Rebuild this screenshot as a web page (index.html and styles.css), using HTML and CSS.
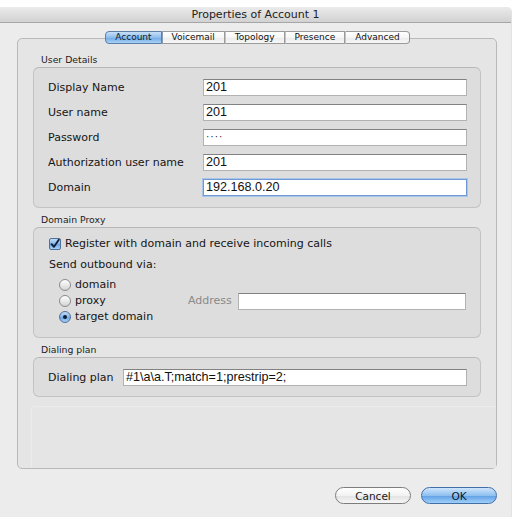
FILE: index.html
```html
<!DOCTYPE html>
<html>
<head>
<meta charset="utf-8">
<title>Properties of Account 1</title>
<link rel="stylesheet" href="styles.css">
</head>
<body>
<div class="window">
  <div class="titlebar">Properties of Account 1</div>
  <div class="main">
    <div class="tabview">
      <div class="tabs">
        <div class="tab selected">Account</div>
        <div class="tab">Voicemail</div>
        <div class="tab">Topology</div>
        <div class="tab">Presence</div>
        <div class="tab">Advanced</div>
      </div>
      <div class="tabbox">
        <div class="group-label">User Details</div>
        <div class="group details">
          <label class="lbl">Display Name</label><div class="field">201</div>
          <label class="lbl">User name</label><div class="field">201</div>
          <label class="lbl">Password</label><div class="field pw">····</div>
          <label class="lbl">Authorization user name</label><div class="field">201</div>
          <label class="lbl">Domain</label><div class="field focus">192.168.0.20</div>
        </div>

        <div class="group-label gap">Domain Proxy</div>
        <div class="group proxy">
          <div class="check-row">
            <span class="checkbox"><svg width="10" height="10" viewBox="0 0 10 10"><path d="M1.6 5.2 L4 7.8 L8.8 0.8" fill="none" stroke="#10203a" stroke-width="1.9" stroke-linecap="round" stroke-linejoin="round"/></svg></span>
            <span class="lbl">Register with domain and receive incoming calls</span>
          </div>
          <div class="lbl send">Send outbound via:</div>
          <div class="radios">
            <div class="radio-row"><span class="radio"></span><span class="lbl">domain</span></div>
            <div class="radio-row addr-row">
              <div class="radio-part"><span class="radio"></span><span class="lbl">proxy</span></div>
              <span class="lbl dim">Address</span>
              <div class="field grow"></div>
            </div>
            <div class="radio-row"><span class="radio on"></span><span class="lbl">target domain</span></div>
          </div>
        </div>

        <div class="group-label gap">Dialing plan</div>
        <div class="group dial">
          <label class="lbl">Dialing plan</label>
          <div class="field grow">#1\a\a.T;match=1;prestrip=2;</div>
        </div>

        <div class="filler"></div>
      </div>
    </div>
    <div class="buttons">
      <button class="btn">Cancel</button>
      <button class="btn default">OK</button>
    </div>
  </div>
</div>
</body>
</html>
```

FILE: styles.css
```css
html, body {
  margin: 0;
  padding: 0;
  background: #ffffff;
}

body {
  padding-top: 7px;
  font-family: "DejaVu Sans", "Lucida Grande", sans-serif;
  color: #1c1c1c;
}

.window {
  width: 512px;
  height: 510px;
  background: #ececec;
  border-top-right-radius: 5px;
  display: flex;
  flex-direction: column;
  box-sizing: border-box;
  border-right: 1px solid #e2e2e2;
}

.titlebar {
  height: 16px;
  box-sizing: border-box;
  border-bottom: 1px solid #a6a6a6;
  background: linear-gradient(#ebebeb, #d2d2d2);
  border-top-right-radius: 5px;
  text-align: center;
  font-size: 11px;
  line-height: 15px;
  color: #222222;
}

.main {
  flex: 1;
  display: flex;
  flex-direction: column;
  padding: 8px 14px 15px 17px;
}

.tabview {
  display: flex;
  flex-direction: column;
}

.tabs {
  position: relative;
  z-index: 1;
  display: flex;
  justify-content: center;
  margin-bottom: -6px;
  padding-left: 1px;
}

.tab {
  height: 13px;
  box-sizing: border-box;
  padding: 0 9px;
  font-size: 9px;
  line-height: 11px;
  color: #111111;
  background: linear-gradient(#ffffff, #f6f6f6 50%, #ebebeb 51%, #f7f7f7);
  border: 1px solid #9b9b9b;
  border-left: 1px solid #c4c4c4;
}

.tab:first-child {
  border-left: 1px solid #7a8eb0;
  border-radius: 4px 0 0 4px;
}

.tab:last-child {
  border-radius: 0 4px 4px 0;
  border-right: 1px solid #8f8f8f;
}

.tab.selected {
  background: linear-gradient(#c7e0f8, #8fbdec 50%, #6ea8e6 51%, #a9d2f6);
  border-color: #5f7ea8;
  color: #0c1a2c;
}

.tab.selected + .tab {
  border-left-color: #8a9ab0;
}

.tabbox {
  height: 431px;
  box-sizing: border-box;
  border: 1px solid #b9b9b9;
  border-radius: 5px;
  background: #e5e5e5;
  padding: 15px 15px 0 15px;
  display: flex;
  flex-direction: column;
}

.group-label {
  font-size: 9.3px;
  line-height: 12px;
  height: 12px;
  padding-left: 8px;
  margin-bottom: 1px;
  color: #1c1c1c;
}

.group-label.gap {
  margin-top: 6px;
}

.group {
  border: 1px solid #c3c3c3;
  border-top-color: #b8b8b8;
  border-radius: 6px;
  background: #dddddd;
  box-sizing: border-box;
}

.lbl {
  font-size: 11px;
  line-height: 14px;
  color: #151515;
}

.field {
  height: 17px;
  box-sizing: border-box;
  background: #ffffff;
  border: 1px solid #b2b2b2;
  border-top-color: #828282;
  font-family: "Liberation Sans", Arial, sans-serif;
  font-size: 12.6px;
  line-height: 15px;
  padding-left: 2px;
  color: #111;
  white-space: nowrap;
  overflow: hidden;
}

.field.pw {
  font-size: 10px;
  letter-spacing: 1px;
  line-height: 14px;
}

.field.focus {
  border-color: #6f99d2;
  box-shadow: 0 0 0 1px #a8c5ec;
}

.details {
  display: grid;
  grid-template-columns: 155px 1fr;
  row-gap: 8px;
  align-items: center;
  padding: 11px 13px 11px 14px;
}

.proxy {
  padding: 9px 14px 12px 15px;
  height: 111px;
}

.check-row {
  display: flex;
  align-items: center;
  height: 14px;
}

.checkbox {
  width: 12px;
  height: 12px;
  box-sizing: border-box;
  border: 1px solid #4f6f9c;
  border-radius: 2px;
  background: linear-gradient(#c2dcf6, #86b6ea 50%, #6aa3e2 51%, #a7cff4);
  display: flex;
  align-items: center;
  justify-content: center;
  margin-right: 4px;
}

.send {
  margin-top: 7px;
}

.radios {
  margin-top: 5px;
  padding-left: 10px;
}

.radio-row {
  display: flex;
  align-items: center;
  height: 16px;
}

.radio {
  width: 12px;
  height: 12px;
  box-sizing: border-box;
  border-radius: 50%;
  border: 1px solid #8b8b8b;
  background: linear-gradient(#ffffff, #e7e7e7 55%, #d3d3d3);
  margin-right: 4px;
  display: flex;
  align-items: center;
  justify-content: center;
}

.radio.on {
  border-color: #4f6f9c;
  background: linear-gradient(#c2dcf6, #86b6ea 50%, #6aa3e2 51%, #a7cff4);
}

.radio.on::after {
  content: "";
  width: 4px;
  height: 4px;
  border-radius: 50%;
  background: #0f1e36;
}

.radio-part {
  display: flex;
  align-items: center;
  width: 129px;
}

.addr-row .dim {
  color: #8a8a8a;
  margin-right: 6px;
}

.grow {
  flex: 1;
}

.dial {
  display: flex;
  align-items: center;
  padding: 11px 13px 10px 14px;
}

.dial .lbl {
  width: 75px;
}

.filler {
  flex: 1;
  margin: 9px -15px 0 -2px;
  border-top: 1px solid #ebebeb;
  border-left: 1px solid #ebebeb;
  border-top-left-radius: 3px;
  background: #e5e5e5;
}

.buttons {
  display: flex;
  justify-content: flex-end;
  gap: 10px;
  margin-top: 18px;
  padding-right: 0;
}

.btn {
  width: 76px;
  height: 17px;
  box-sizing: border-box;
  border-radius: 9px;
  border: 1px solid #7d7d7d;
  background: linear-gradient(#ffffff, #f2f2f2 50%, #e2e2e2 51%, #f6f6f6);
  font-family: "DejaVu Sans", "Lucida Grande", sans-serif;
  font-size: 10.5px;
  line-height: 14px;
  color: #1a1a1a;
  padding: 0;
  margin: 0;
}

.btn.default {
  border-color: #436fa8;
  background: linear-gradient(#cfe5fb, #8fc0f0 50%, #5f9fe6 51%, #9fd0f8);
  color: #0b1830;
}
```
